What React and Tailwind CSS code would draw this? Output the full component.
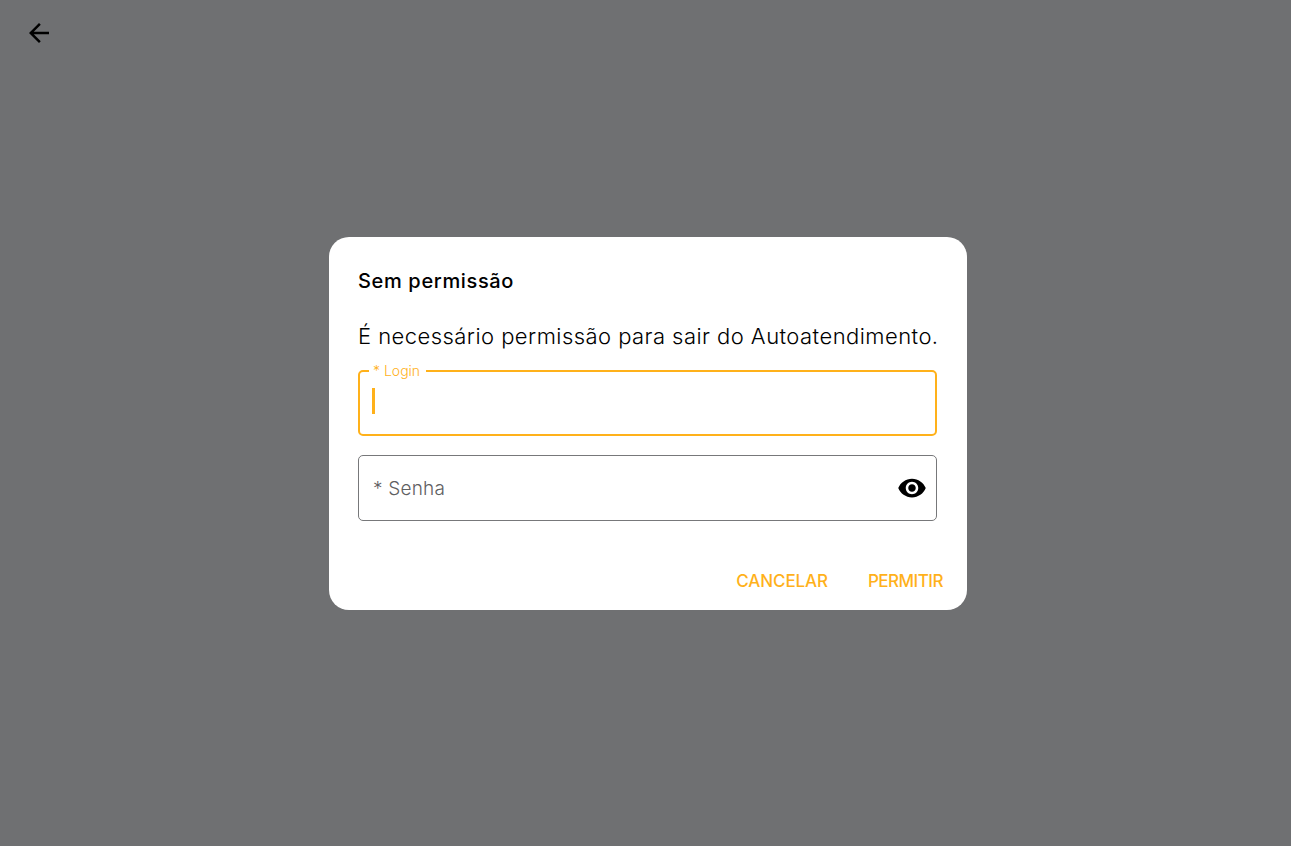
const BackIcon = () => (
  <svg width="30" height="30" viewBox="0 0 24 24" fill="currentColor">
    <path d="M20 11H7.83l5.59-5.59L12 4l-8 8 8 8 1.41-1.41L7.83 13H20v-2z" />
  </svg>
);

const EyeIcon = () => (
  <svg width="30" height="30" viewBox="0 0 24 24" fill="currentColor">
    <path d="M12 4.5C7 4.5 2.73 7.61 1 12c1.73 4.39 6 7.5 11 7.5s9.27-3.11 11-7.5c-1.73-4.39-6-7.5-11-7.5zM12 17c-2.76 0-5-2.24-5-5s2.24-5 5-5 5 2.24 5 5-2.24 5-5 5zm0-8c-1.66 0-3 1.34-3 3s1.34 3 3 3 3-1.34 3-3-1.34-3-3-3z" />
  </svg>
);

export default function App() {
  return (
    <div className="relative h-[846px] w-full overflow-hidden bg-[#6f7072] font-['Inter',sans-serif] text-black">
      <button className="ml-6 mt-[18px] flex text-black">
        <BackIcon />
      </button>

      <div className="absolute inset-0 flex items-center justify-center pl-[5px]">
        <div className="h-[373px] w-[638px] rounded-[20px] bg-white px-[29px] pt-[32px]">
          <h2 className="text-[20px] font-medium leading-[24px] tracking-[0.65px]">Sem permissão</h2>
          <p className="mt-[29px] whitespace-nowrap text-[22px] font-light leading-[28px] tracking-[0.45px]">
            É necessário permissão para sair do Autoatendimento.
          </p>

          <div className="relative mt-[20px] flex h-[66px] w-[579px] items-center rounded-[5px] border-2 border-[#ffb11a] pl-[12px]">
            <span className="absolute -top-[10px] left-[9px] bg-white pl-[4px] pr-[6px] text-[14px] font-light leading-[17px] text-[#ffb11a]">
              * Login
            </span>
            <span className="mb-1 h-[26px] w-[3px] bg-[#ffb11a]" />
          </div>

          <div className="mt-[19px] flex h-[66px] w-[579px] items-center justify-between rounded-[5px] border border-[#77787a] pl-[14px] pr-[9px]">
            <span className="pt-1 text-[19px] font-light tracking-[0.2px] text-[#5f6062]">* Senha</span>
            <EyeIcon />
          </div>

          <div className="-mr-[5px] mt-[47px] flex justify-end gap-10">
            <button className="text-[17px] font-medium leading-[26px] tracking-[-0.1px] text-[#ffb11a]">CANCELAR</button>
            <button className="text-[17px] font-medium leading-[26px] tracking-[-0.5px] text-[#ffb11a]">PERMITIR</button>
          </div>
        </div>
      </div>
    </div>
  );
}
